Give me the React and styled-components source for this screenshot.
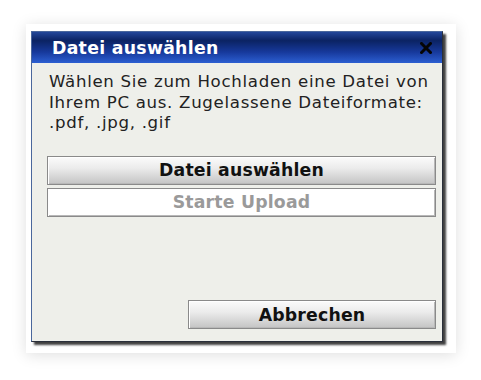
import React from "react";
import styled, { createGlobalStyle } from "styled-components";

const Global = createGlobalStyle`
  html, body { margin: 0; padding: 0; background: #ffffff; }
  body { font-family: "DejaVu Sans", Verdana, sans-serif; }
`;

const Page = styled.div`
  width: 481px;
  height: 380px;
  padding: 24px 0 0 26px;
  box-sizing: border-box;
`;

const Card = styled.div`
  width: 430px;
  height: 329px;
  box-sizing: border-box;
  background: #ffffff;
  padding: 7px 13px 11px 5px;
  box-shadow: 0 2px 14px rgba(0, 0, 0, 0.13);
`;

const Dialog = styled.div`
  width: 412px;
  height: 311px;
  box-sizing: border-box;
  display: flex;
  flex-direction: column;
  background: #eeefea;
  border: 1px solid #4a679c;
  border-right-color: #2a2f3a;
  border-bottom-color: #2a2f3a;
  box-shadow: 3px 3px 2px rgba(0, 0, 0, 0.75);
`;

const TitleBar = styled.div`
  height: 31px;
  flex: none;
  display: flex;
  align-items: center;
  justify-content: space-between;
  padding: 0 10px 0 20px;
  background: linear-gradient(
    to bottom,
    #23479a 0%,
    #0b2363 28%,
    #17399c 65%,
    #2c5fd2 100%
  );
`;

const Title = styled.span`
  color: #ffffff;
  font-weight: bold;
  font-size: 17.3px;
  letter-spacing: 0.3px;
`;

const CloseIcon = styled.svg`
  width: 12px;
  height: 12px;
  display: block;
  margin-top: 1px;
`;

const Body = styled.div`
  flex: 1;
  display: flex;
  flex-direction: column;
  padding: 9px 6px 12px 15px;
`;

const Text = styled.p`
  margin: 0 0 22px 2px;
  font-size: 16.6px;
  line-height: 20.5px;
  letter-spacing: 0.7px;
  color: #222222;
`;

const Button = styled.div`
  height: 29px;
  box-sizing: border-box;
  display: flex;
  align-items: center;
  justify-content: center;
  font-size: 17.3px;
  font-weight: bold;
  letter-spacing: 0.2px;
  border: 1px solid #8a8a8a;
  box-shadow: inset 1px 1px 0 #ffffff, inset -1px -1px 0 #b8b8b8;
  color: ${(p) => (p.$disabled ? "#9a9a9a" : "#111111")};
  background: ${(p) =>
    p.$disabled
      ? "#ffffff"
      : "linear-gradient(to bottom, #fbfbfb 0%, #ececec 40%, #c4c4c4 100%)"};
  margin-bottom: ${(p) => p.$gap || 0}px;
  width: ${(p) => p.$width || "auto"};
  align-self: ${(p) => (p.$right ? "flex-end" : "stretch")};
`;

const Spacer = styled.div`
  flex: 1;
`;

export default function App() {
  return (
    <>
      <Global />
      <Page>
        <Card>
          <Dialog>
            <TitleBar>
              <Title>Datei auswählen</Title>
              <CloseIcon viewBox="0 0 12 12" aria-label="Schließen">
                <path
                  d="M1.5 1.5 L10.5 10.5 M10.5 1.5 L1.5 10.5"
                  stroke="#050505"
                  strokeWidth="3"
                  strokeLinecap="square"
                />
              </CloseIcon>
            </TitleBar>
            <Body>
              <Text>
                Wählen Sie zum Hochladen eine Datei von Ihrem PC aus.
                Zugelassene Dateiformate: .pdf, .jpg, .gif
              </Text>
              <Button $gap={3}>Datei auswählen</Button>
              <Button $disabled>Starte Upload</Button>
              <Spacer />
              <Button $right $width="248px">Abbrechen</Button>
            </Body>
          </Dialog>
        </Card>
      </Page>
    </>
  );
}
